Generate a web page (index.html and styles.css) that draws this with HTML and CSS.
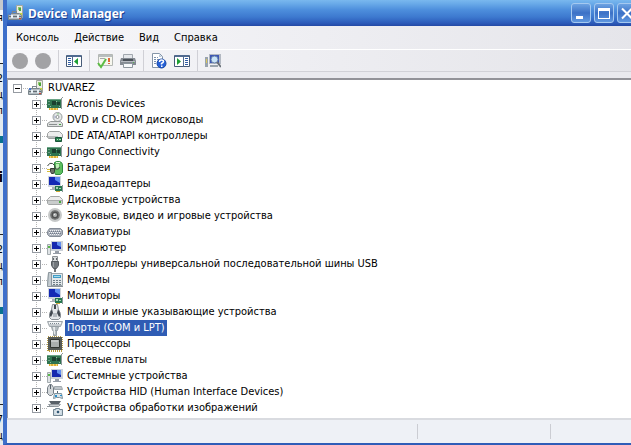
FILE: index.html
```html
<!DOCTYPE html>
<html lang="ru">
<head>
    <meta charset="UTF-8">
    <meta name="viewport" content="width=device-width, initial-scale=1.0">
    <title>Device Manager</title>
    <link rel="stylesheet" href="styles.css">
</head>
<body>
    <svg class="sprite" aria-hidden="true">
        <symbol id="i-root" viewBox="0 0 16 16">
            <path fill="#eceee4" stroke="#a3a89f" d="M8.500.5h6v12h-6z"/>
            <path fill="#8fc66b" d="M10 2h3v3h-3z"/><path fill="#4aa53a" d="M11 3h2v3h-2z"/><path fill="#c7dc3c" d="M12 8h2v3h-2z"/>
            <path fill="#7d878d" d="M4 6h5v2H8V7H5v1H4z"/>
            <path fill="#b4bdc2" stroke="#7b868c" d="M1.500 8.500h10l2 2v4h-13v-4z"/>
            <path fill="#636d74" d="M1 11h12v1H1z"/><path fill="#e9f1f5" d="M3 10h2v3H3zM9 10h2v3H9z"/>
            <path fill="#4a78cf" d="M1 8h2v2H1z"/><path fill="#d64530" d="M11 13h2v1h-2z"/>
        </symbol>
        <symbol id="i-card" viewBox="0 0 16 16">
            <path fill="#2f7450" d="M0 3h14v9H0z"/><path fill="#6ca486" d="M0 3h14v1H0zM1 5h2v1H1zM1 8h2v1H1z"/>
            <path fill="#1b4030" d="M5 5h4v4H5zM10 6h3v3h-3z"/>
            <path fill="#95b8a0" d="M3 10h1v1H3zM9 5h1v1H9zM12 10h1v1h-1z"/>
            <path fill="#dcae35" d="M2 12h9v2H2z"/><path fill="#f3d976" d="M3 12h1v2H3zM6 12h1v2H6zM9 12h1v2H9z"/>
            <path fill="#8d9899" d="M14 2h1v11h-1zM15 1h1v1h-1z"/>
        </symbol>
        <symbol id="i-cd" viewBox="0 0 16 16">
            <circle cx="10.5" cy="5" r="4.5" fill="#e7eae9" stroke="#979d9d"/>
            <path fill="#9fce9e" d="M10 1h2l-1 3z"/><path fill="#c0c6d8" d="M7 3l3 2-3 2z"/>
            <circle cx="10.5" cy="5" r="1.5" fill="#fff" stroke="#8d9292"/>
            <path fill="#dfe1e1" stroke="#929696" d="M3.5 9.5h10l2 2v3h-15v-3z"/>
            <path fill="#8a8f8f" d="M2 12h8v1H2z"/><path fill="#40a641" d="M12 12h2v1h-2z"/>
        </symbol>
        <symbol id="i-drive" viewBox="0 0 16 16">
            <path fill="#ececec" stroke="#a3a6a6" d="M3.5 4.5h9l3 3v4l-1 1h-13l-1-1v-4z"/>
            <path fill="#a8abab" d="M1 8h14v1H1z"/><path fill="#c9cccc" d="M1 9h14v3H1z"/>
            <path fill="#42aa3b" d="M12 9h2v2h-2z"/>
        </symbol>
        <symbol id="i-ide" viewBox="0 0 16 16">
            <path fill="#ededed" stroke="#9da0a0" d="M2.5 3.5h10l3 3v3l-1 1h-13l-1-1v-4z"/>
            <path fill="#b9bcbc" d="M1 8h10v2H1z"/>
            <path fill="#2a8050" stroke="#185538" d="M8.5 9.5h6v4h-6z"/><path fill="#b8dfbd" d="M10 11h1v1h-1zM12 11h2v1h-2z"/>
        </symbol>
        <symbol id="i-battery" viewBox="0 0 16 16">
            <path fill="#5cbd5d" stroke="#2f8a3e" d="M7.500 2.500l2-1h3l2 1 1 2v8l-2 2h-5l-1-2z"/>
            <path fill="#c0efb6" d="M9 4h3v5H9z"/><path fill="#e6f4df" d="M9 2h4v1H9z"/>
            <path fill="none" stroke="#3d463f" d="M.5 6q2-4 5-2.500t3 5.500q4 1 4-2"/>
            <path fill="#6b7264" stroke="#343b34" d="M3.500 8.500h4v3l-1 2h-2l-1-2z"/>
            <path fill="#d6bc3a" d="M0 9h3v1H0zM0 11h3v1H0z"/>
        </symbol>
        <symbol id="i-display" viewBox="0 0 16 16">
            <path fill="#cfd5dd" d="M1 0h13v11H1z"/><path fill="#1429b5" d="M2 1h11v8H2z"/>
            <path fill="#5d8df0" d="M8 1h5v6L8 4z"/><path fill="#aab1b7" d="M5 11h4v2H5zM3 13h5v1H3z"/>
            <path fill="#26784f" d="M8 10h7v5H8z"/><path fill="#a9d0b1" d="M9 11h2v2H9zM12 12h2v1h-2z"/>
            <path fill="#d4a936" d="M9 15h4v1H9z"/><path fill="#8b9899" d="M15 9h1v7h-1z"/>
        </symbol>
        <symbol id="i-sound" viewBox="0 0 16 16">
            <circle cx="8" cy="7" r="6" fill="#8b8d8d" stroke="#c6c8c8" stroke-width="2"/>
            <circle cx="8" cy="7" r="4" fill="#4f5050" stroke="#737474"/>
            <circle cx="8" cy="7" r="2" fill="#b5b7b7"/><path fill="#eee" d="M7 6h1v1H7z"/>
        </symbol>
        <symbol id="i-keyboard" viewBox="0 0 16 16">
            <path fill="#a9afb9" stroke="#858c97" d="M2.500 4.500h11l2 2v4l-2 2h-11l-2-2v-3z"/>
            <path stroke="#f0f2f5" stroke-dasharray="1 1" d="M3 6.500h11M2 8.500h12M3 10.500h10"/>
            <path stroke="#727b8b" stroke-dasharray="1 1" d="M2 7.500h12M3 9.500h11"/>
        </symbol>
        <symbol id="i-computer" viewBox="0 0 16 16">
            <path fill="#cbd1d8" d="M4 1h12v10H4z"/><path fill="#1528af" d="M5 2h9v7H5z"/>
            <path fill="#6390ef" d="M10 2h4v5l-4-2z"/><path fill="#969da7" d="M8 11h4v2H8zM6 13h8v1H6z"/>
            <path fill="#dfe3e6" stroke="#a3abae" d="M.5 4.500h3v10h-3z"/><path fill="#57b748" d="M1 6h2v2H1z"/>
        </symbol>
        <symbol id="i-usb" viewBox="0 0 16 16">
            <path fill="#d9dcde" stroke="#8b9094" d="M5.500.5h5v5h-5z"/><path fill="#62676b" d="M6 2h1v2H6zM9 2h1v2H9z"/>
            <path fill="#73787d" stroke="#565b60" d="M4.500 5.500h7v4l-2 3h-3l-2-3z"/><path fill="#9da2a6" d="M6 6h1v5H6z"/>
            <path fill="#6f7478" d="M7 13h2v3H7z"/>
        </symbol>
        <symbol id="i-modem" viewBox="0 0 16 16">
            <path fill="#e3e8ea" stroke="#9aa4aa" d="M1.500 1.500h14v12h-15z"/>
            <path fill="#c5cdd2" stroke="#8b969d" d="M1.500.5h3v14h-4z"/>
            <path fill="#419bc5" d="M6 3h8v3H6z"/><path fill="#a6dceb" d="M7 4h6v1H7z"/>
            <path stroke="#6f7e88" stroke-dasharray="2 1" d="M6 8.500h8M6 10.500h8M6 12.500h8"/>
            <path fill="#8b949a" d="M1 14h15v1H1z"/>
        </symbol>
        <symbol id="i-mouse" viewBox="0 0 16 16">
            <path fill="#e4e6e8" stroke="#8a9095" d="M5.500.5h5l1 5 2 4v4l-2 2h-7l-2-2v-4l2-4z"/>
            <path fill="#41474e" d="M7 1h2v4H7zM5 5l1 4-2 4-1-1V9zM11 5l-1 4 2 4 1-1V9z"/>
            <path fill="#b5babf" d="M6 9h4v4H6z"/>
        </symbol>
        <symbol id="i-port" viewBox="0 0 16 16">
            <path fill="#c7ccd0" stroke="#a0a7ac" d="M.5 1.500h15l-2 5h-11z"/><path fill="#f0f3f4" d="M2 2h12v2H2z"/>
            <path stroke="#7c878f" stroke-dasharray="1 1" d="M3 3.500h10"/>
            <path fill="#b7bec2" stroke="#969fa4" d="M4.500 6.500h7l-1 4h-5zM6.500 10.500h3v5h-3z"/><path fill="#e8eced" d="M6 7h2v7H7z"/>
        </symbol>
        <symbol id="i-cpu" viewBox="0 0 16 16">
            <path fill="none" stroke="#b99c3f" stroke-width="2" stroke-dasharray="1 1" d="M1 1h14v14H1z"/>
            <path fill="#565a57" d="M1 1h14v13H1z"/><path fill="#aaaead" stroke="#303430" d="M3.500 3.500h9v8h-9z"/>
            <path fill="#c4c7c6" d="M4 4h7v2H4z"/>
        </symbol>
        <symbol id="i-hid" viewBox="0 0 16 16">
            <path fill="#d2d6d9" stroke="#737c84" d="M2.500.5h2l2 3v6l-2 2h-2l-2-2v-6z"/>
            <path fill="#58636c" d="M3 1h1v4H3z"/><path fill="#bdc4c9" stroke="#a0a8ad" d="M7.500 2.500h7l1 3h-8z"/>
            <path fill="#d9e3e8" stroke="#7e929d" d="M7.500 9.500h7l1 5-3-1h-3l-3 1z"/>
            <path fill="#288fca" d="M8 11h2v2H8zM13 11h2v1h-2z"/><path fill="#5b666f" d="M10 7h1v2h-1z"/>
        </symbol>
        <symbol id="i-camera" viewBox="0 0 16 16">
            <path fill="#596168" d="M2 1h12l-2 3H4z"/><path fill="#c9cdd0" stroke="#969ca1" d="M1.500 4.500h12l-2 2h-8z"/>
            <path fill="#8c9398" d="M0 6h7v1H0z"/>
            <path fill="#cbd9e2" stroke="#738693" d="M6.500 9.500h2v-1h4v1h3v6h-9z"/>
            <circle cx="11" cy="12" r="2" fill="#315775" stroke="#fff"/>
        </symbol>
        <symbol id="t-left" viewBox="0 0 16 16">
            <path fill="#fff" stroke="#465b78" d="M.5 2.500h15v11H.5z"/><path fill="#516b90" d="M1 2h14v2H1zM6 4h1v10H6z"/>
            <path stroke="#315da4" stroke-dasharray="1 1" stroke-width="3" d="M3.500 5v8"/><path fill="#1d9f32" d="M12 5v7L8 8.500z"/>
        </symbol>
        <symbol id="t-right" viewBox="0 0 16 16">
            <path fill="#fff" stroke="#465b78" d="M.5 2.500h15v11H.5z"/><path fill="#516b90" d="M1 2h14v2H1zM9 4h1v10H9z"/>
            <path stroke="#315da4" stroke-dasharray="1 1" stroke-width="3" d="M12.500 5v8"/><path fill="#1d9f32" d="M3 5v7l4-3.500z"/>
        </symbol>
        <symbol id="t-check" viewBox="0 0 16 16">
            <path fill="#f7f7ef" stroke="#b4b8b4" d="M1.500 1.500h14v11h-14z"/><path fill="#b8bec0" d="M2 2h13v2H2z"/>
            <path stroke="#a5aaaa" d="M3 5.500h5"/><path fill="#df6b3a" d="M11 5h2v4h-2zM11 10h2v1h-2z"/>
            <path fill="none" stroke="#5cbc45" stroke-width="2" d="M1 10l3 4L9 6"/>
        </symbol>
        <symbol id="t-print" viewBox="0 0 16 16">
            <path fill="#e4e7eb" stroke="#a1a7ae" d="M3.500 1.500h9v5h-9z"/><path fill="#858b93" d="M1 5h14l1 3v4H0V8z"/>
            <path fill="#4a5058" d="M3 6h10v2H3z"/><path fill="#b6bbc2" d="M1 8h14v1H1z"/>
            <path fill="#f8fafc" stroke="#8d969e" d="M3.500 10.500h9v4h-9z"/><path fill="#57b451" d="M13 9h1v1h-1z"/>
        </symbol>
        <symbol id="t-help" viewBox="0 0 16 16">
            <path fill="#fff" stroke="#8595a8" d="M1.500.5h7l3 3v11h-10z"/><path fill="#b8c9dc" d="M8 1v3h3z"/>
            <path stroke="#7c91ae" stroke-dasharray="2 1" d="M3 4.500h4M3 6.500h6M3 8.500h4M3 10.500h3"/>
            <circle cx="10.500" cy="10.500" r="4.500" fill="#2460d8" stroke="#1646a3"/>
            <path fill="none" stroke="#fff" stroke-width="1.500" d="M8.500 9q0-2 2-2t2 1.500q0 1-2 2v1"/><path fill="#fff" d="M10 12.500h1.500V14H10z"/>
        </symbol>
        <symbol id="t-scan" viewBox="0 0 16 16">
            <path fill="#b3b9c2" d="M4 1h12v10H4z"/><path fill="#3d57b4" d="M5 2h9v8H5z"/>
            <path fill="#9aa4ad" d="M0 4h3v10H0zM5 12h8v2H5z"/><path fill="#d9c65d" d="M1 6h1v4H1z"/>
            <circle cx="9.500" cy="6.500" r="3.500" fill="#c9e4f7" stroke="#6983ad"/><path stroke="#697078" stroke-width="2" d="M12 9l4 5"/>
        </symbol>
    </svg>

    <div class="desktop">
        <div class="backdrop" aria-hidden="true">
            <span>я</span>
            <span class="line">2</span>
            <span>ц</span>
            <span>п</span>
            <i class="mark"></i>
            <b>i</b>
            <span class="line">2</span>
            <span>ц</span>
            <span>п</span>
            <i class="mark"></i>
            <span class="line">7</span>
            <span>ц</span>
        </div>
        <div class="window">
            <header class="titlebar">
                <svg class="icon"><use href="#i-root"/></svg>
                <h1>Device Manager</h1>
                <div class="controls">
                    <button aria-label="Minimize"><svg viewBox="0 0 18 18"><path fill="#fff" d="M4 12h7v3H4z"/></svg></button>
                    <button aria-label="Maximize"><svg viewBox="0 0 18 18"><path fill="#fff" fill-rule="evenodd" d="M3 4h12v11H3zM4 7v7h10V7z"/></svg></button>
                    <button aria-label="Close"><svg viewBox="0 0 18 18"><path fill="none" stroke="#fff" stroke-width="2" d="M4 4.500l10 10M14 4.500l-10 10"/></svg></button>
                </div>
            </header>
            <nav class="menubar">
                <button>Консоль</button>
                <button>Действие</button>
                <button>Вид</button>
                <button>Справка</button>
            </nav>
            <div class="toolbar">
                <button class="round" aria-label="Back"></button>
                <button class="round" aria-label="Forward"></button>
                <span class="sep"></span>
                <button aria-label="Console tree"><svg class="icon"><use href="#t-left"/></svg></button>
                <span class="sep"></span>
                <button aria-label="Properties"><svg class="icon"><use href="#t-check"/></svg></button>
                <button aria-label="Print"><svg class="icon"><use href="#t-print"/></svg></button>
                <span class="sep"></span>
                <button aria-label="Help"><svg class="icon"><use href="#t-help"/></svg></button>
                <button aria-label="Action pane"><svg class="icon"><use href="#t-right"/></svg></button>
                <span class="sep"></span>
                <button aria-label="Scan"><svg class="icon"><use href="#t-scan"/></svg></button>
            </div>
            <main class="tree">
                <div class="node root">
                    <button class="toggle open" aria-label="Collapse"></button>
                    <svg class="icon"><use href="#i-root"/></svg>
                    <span class="label">RUVAREZ</span>
                </div>
                <ul>
                    <li class="node"><button class="toggle" aria-label="Expand"></button><svg class="icon"><use href="#i-card"/></svg><span class="label">Acronis Devices</span></li>
                    <li class="node"><button class="toggle" aria-label="Expand"></button><svg class="icon"><use href="#i-cd"/></svg><span class="label">DVD и CD-ROM дисководы</span></li>
                    <li class="node"><button class="toggle" aria-label="Expand"></button><svg class="icon"><use href="#i-ide"/></svg><span class="label">IDE ATA/ATAPI контроллеры</span></li>
                    <li class="node"><button class="toggle" aria-label="Expand"></button><svg class="icon"><use href="#i-card"/></svg><span class="label">Jungo Connectivity</span></li>
                    <li class="node"><button class="toggle" aria-label="Expand"></button><svg class="icon"><use href="#i-battery"/></svg><span class="label">Батареи</span></li>
                    <li class="node"><button class="toggle" aria-label="Expand"></button><svg class="icon"><use href="#i-display"/></svg><span class="label">Видеоадаптеры</span></li>
                    <li class="node"><button class="toggle" aria-label="Expand"></button><svg class="icon"><use href="#i-drive"/></svg><span class="label">Дисковые устройства</span></li>
                    <li class="node"><button class="toggle" aria-label="Expand"></button><svg class="icon"><use href="#i-sound"/></svg><span class="label">Звуковые, видео и игровые устройства</span></li>
                    <li class="node"><button class="toggle" aria-label="Expand"></button><svg class="icon"><use href="#i-keyboard"/></svg><span class="label">Клавиатуры</span></li>
                    <li class="node"><button class="toggle" aria-label="Expand"></button><svg class="icon"><use href="#i-computer"/></svg><span class="label">Компьютер</span></li>
                    <li class="node"><button class="toggle" aria-label="Expand"></button><svg class="icon"><use href="#i-usb"/></svg><span class="label">Контроллеры универсальной последовательной шины USB</span></li>
                    <li class="node"><button class="toggle" aria-label="Expand"></button><svg class="icon"><use href="#i-modem"/></svg><span class="label">Модемы</span></li>
                    <li class="node"><button class="toggle" aria-label="Expand"></button><svg class="icon"><use href="#i-display"/></svg><span class="label">Мониторы</span></li>
                    <li class="node"><button class="toggle" aria-label="Expand"></button><svg class="icon"><use href="#i-mouse"/></svg><span class="label">Мыши и иные указывающие устройства</span></li>
                    <li class="node"><button class="toggle" aria-label="Expand"></button><svg class="icon"><use href="#i-port"/></svg><span class="label selected">Порты (COM и LPT)</span></li>
                    <li class="node"><button class="toggle" aria-label="Expand"></button><svg class="icon"><use href="#i-cpu"/></svg><span class="label">Процессоры</span></li>
                    <li class="node"><button class="toggle" aria-label="Expand"></button><svg class="icon"><use href="#i-card"/></svg><span class="label">Сетевые платы</span></li>
                    <li class="node"><button class="toggle" aria-label="Expand"></button><svg class="icon"><use href="#i-computer"/></svg><span class="label">Системные устройства</span></li>
                    <li class="node"><button class="toggle" aria-label="Expand"></button><svg class="icon"><use href="#i-hid"/></svg><span class="label">Устройства HID (Human Interface Devices)</span></li>
                    <li class="node"><button class="toggle" aria-label="Expand"></button><svg class="icon"><use href="#i-camera"/></svg><span class="label">Устройства обработки изображений</span></li>
                </ul>
            </main>
            <footer class="statusbar">
                <span></span>
                <span></span>
                <span></span>
            </footer>
        </div>
    </div>
</body>
</html>
```

FILE: styles.css
```css
* {
    box-sizing: border-box;
}
body {
    margin: 0;
    overflow: hidden;
    background: #e2eaef;
    color: #000;
    font-family: Tahoma, "DejaVu Sans Condensed", "DejaVu Sans", sans-serif;
    font-size: 11px;
    line-height: 16px;
}
button {
    margin: 0;
    padding: 0;
    border: none;
    background: none;
    color: inherit;
    font: inherit;
}
.sprite {
    display: none;
}
.icon {
    display: block;
    flex: none;
    width: 16px;
    height: 16px;
}
.desktop {
    display: flex;
    height: 100vh;
}

/* page behind the window */
.backdrop {
    display: flex;
    flex: none;
    flex-direction: column;
    align-items: flex-end;
    width: 3px;
    padding-top: 10px;
    overflow: hidden;
    background: linear-gradient(#c4c8cd 0 10px, #f4f6f8 10px 64px, #e2eaef 64px);
}
.backdrop span:first-child {
    margin-bottom: 37px;
}
.backdrop .mark {
    flex: none;
    width: 3px;
    height: 7px;
    margin: 17px 0 26px;
    background: #08718f;
}
.backdrop b {
    margin-bottom: 49px;
    font-size: 14px;
}
.backdrop .line {
    padding-top: 7px;
    border-top: 1px solid #222;
}
.backdrop .mark + .line {
    margin-top: 64px;
}

.window {
    display: flex;
    flex: 1;
    flex-direction: column;
    min-width: 0;
    margin-right: -10px;
    border: solid #2f5db8;
    border-width: 0 4px 2px;
    border-left-color: #3e6fca;
    background: #e9e9ee;
}
.titlebar {
    display: flex;
    flex: none;
    align-items: center;
    gap: 4px;
    height: 26px;
    padding: 0 0 0 1px;
    background: linear-gradient(#7ab8ee 0, #68a9e8 4px, #4d8edc 10px, #3d79cf 17px, #2c5bba 23px, #2449a5);
    color: #fff;
}
.titlebar h1 {
    flex: 1;
    margin: 0;
    padding-top: 1px;
    font-family: "Trebuchet MS", "Noto Sans", sans-serif;
    font-size: 12px;
    font-weight: bold;
    text-shadow: 1px 1px #1c3f90;
}
.controls {
    display: flex;
    gap: 3px;
}
.controls button {
    width: 20px;
    height: 20px;
    border: 1px solid #a5c9f0;
    border-radius: 3px;
    background: linear-gradient(#6da3e2, #3c71c6 50%, #5f97df);
}
.controls svg {
    display: block;
}
.menubar {
    display: flex;
    flex: none;
    gap: 15px;
    height: 24px;
    padding: 1px 9px 0;
    border-bottom: 1px solid #fff;
    background: linear-gradient(to right, #f7f7fa, #e5e5ea);
}
.toolbar {
    display: flex;
    flex: none;
    align-items: center;
    gap: 7px;
    height: 22px;
    padding: 0 5px;
    border-bottom: 1px solid #d1d1d7;
    background: linear-gradient(to right, #f7f7fa, #e4e4e9);
}
.toolbar .round {
    width: 16px;
    height: 16px;
    border-radius: 50%;
    background: #a2a2a5;
}
.toolbar .sep {
    width: 1px;
    height: 21px;
    background: #d0d0d6;
}
.tree {
    flex: 1;
    min-height: 0;
    margin-top: 6px;
    padding-left: 5px;
    border-top: 2px solid #929298;
    border-left: 1px solid #9a9ca6;
    overflow: hidden;
    background: #fff;
}
.tree ul {
    margin: 0 0 0 19px;
    padding: 0;
    list-style: none;
}
.node {
    display: flex;
    align-items: center;
    height: 16px;
    background: repeating-linear-gradient(to right, #b5b5b5 0 1px, transparent 1px 2px) 8px 8px / 11px 1px no-repeat;
}
.tree li {
    background:
        repeating-linear-gradient(to right, #b5b5b5 0 1px, transparent 1px 2px) 8px 8px / 8px 1px no-repeat,
        repeating-linear-gradient(#b5b5b5 0 1px, transparent 1px 2px) 4px 0 / 1px 16px no-repeat;
}
.tree li:last-child {
    background-size: 8px 1px, 1px 8px;
}
.toggle {
    flex: none;
    width: 9px;
    height: 9px;
    border: 1px solid #969ba2;
    background:
        linear-gradient(#000, #000) center / 5px 1px no-repeat,
        linear-gradient(#000, #000) center / 1px 5px no-repeat,
        #fff;
}
.toggle.open {
    background: linear-gradient(#000, #000) center / 5px 1px no-repeat, #fff;
}
.node .icon {
    margin-left: 6px;
}
.label {
    padding: 0 2px;
    margin-left: 2px;
    white-space: nowrap;
}
.selected {
    background: #2f5cb4;
    color: #fff;
}
.statusbar {
    display: grid;
    flex: none;
    grid-template-columns: 410px 133px 1fr;
    height: 25px;
    padding: 4px 0;
    border-top: 2px solid #d9dbe0;
    background: #eef1f6;
}
.statusbar span + span {
    border-left: 1px solid #cbcdd3;
}
```
